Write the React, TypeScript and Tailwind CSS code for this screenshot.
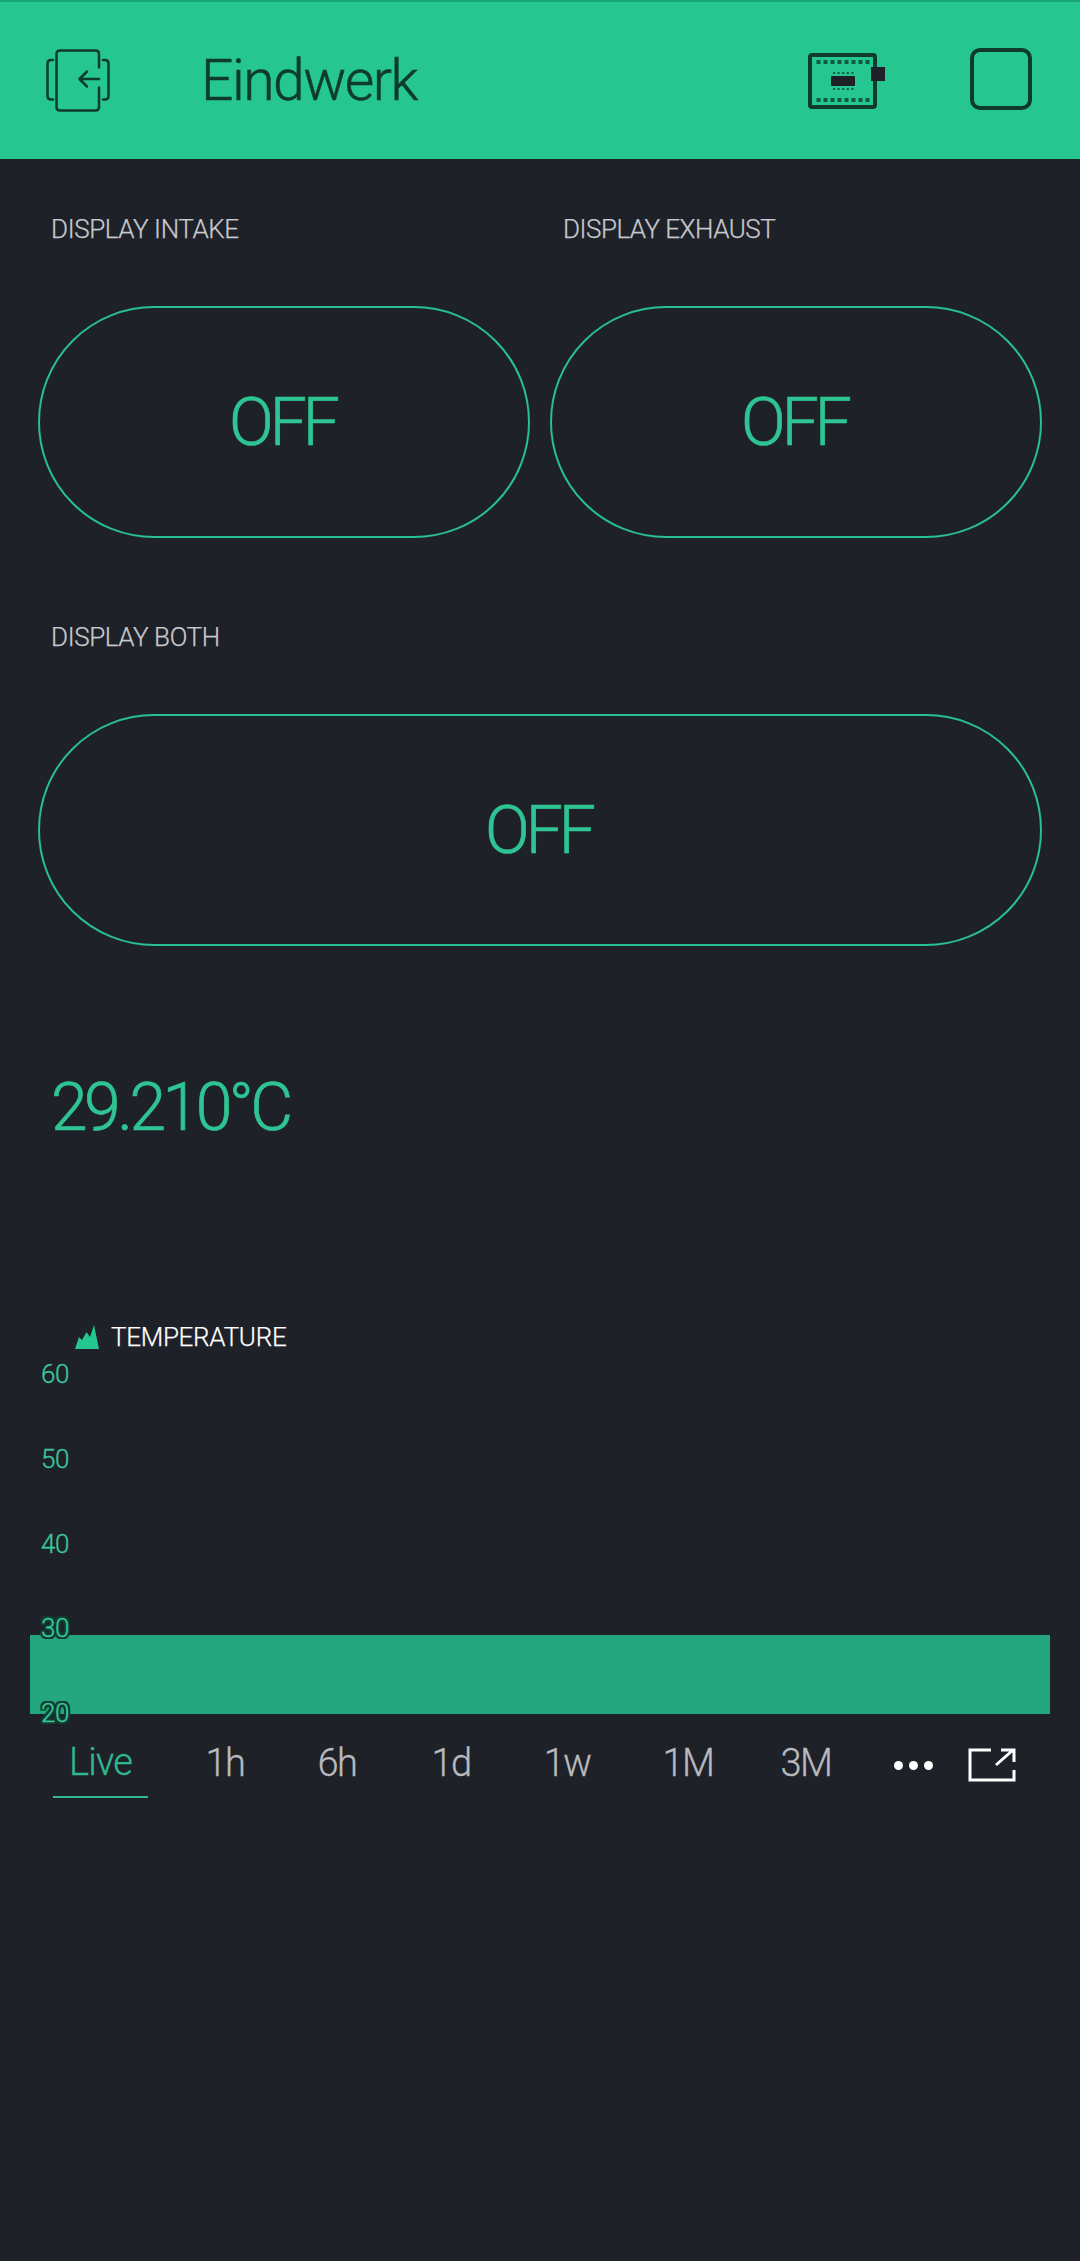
const font = { fontFamily: '"Roboto", "Liberation Sans", sans-serif' };

function DeviceBack() {
  return (
    <svg width="64" height="64" viewBox="0 0 64 64" fill="none" stroke="#0e3b2e" strokeWidth="2.5" strokeLinecap="round" strokeLinejoin="round">
      <path d="M53 18.5V5Q53 1.5 49.5 1.5H14Q10.5 1.5 10.5 5V58Q10.5 61.5 14 61.5H49.5Q53 61.5 53 58V38.5" />
      <path d="M7 11H5Q1.5 11 1.5 14.5V47Q1.5 50.5 5 50.5H7" />
      <path d="M57 11H59Q62.5 11 62.5 14.5V47Q62.5 50.5 59 50.5H57" />
      <path d="M33.5 30H53M41 22.5L33.5 30L41 37.5" />
    </svg>
  );
}

function Chip() {
  const top = [0, 1, 2, 3, 4, 5, 6, 7];
  return (
    <svg width="77" height="56" viewBox="0 0 77 56">
      <rect x="2" y="2" width="65" height="52" rx="2" fill="none" stroke="#0f3a2e" strokeWidth="4" />
      {top.map((i) => (
        <g key={i}>
          <rect x={8.5 + i * 7} y="7" width="4" height="4" fill="#0f5a44" />
          <rect x={8.5 + i * 7} y="45" width="4" height="4" fill="#0f5a44" />
        </g>
      ))}
      {[0, 1, 2, 3, 4].map((i) => (
        <g key={i}>
          <rect x={25 + i * 4.6} y="19" width="2" height="2" fill="#0f5a44" />
          <rect x={25 + i * 4.6} y="35" width="2" height="2" fill="#0f5a44" />
        </g>
      ))}
      <rect x="23" y="23" width="24" height="10" rx="1" fill="#1f1f26" />
      <rect x="63" y="14" width="14" height="14" fill="#1f2028" />
    </svg>
  );
}

function Toggle({ className }: { className: string }) {
  return (
    <div className={`h-[232px] pr-[3px] rounded-full border-2 border-[#27c08e] flex items-center justify-center text-[66px] font-light tracking-[-4px] [-webkit-text-stroke:0.7px] text-[#2fc493] ${className}`}>
      OFF
    </div>
  );
}

function YLabel({ v, halo }: { v: string; halo?: boolean }) {
  return (
    <span className={`h-[26px] leading-[26px] text-[26px] font-light tracking-[-0.5px] [-webkit-text-stroke:0.3px] text-[#3ac99c] ${halo ? "[text-shadow:2px_0_0_#0f3d30,-2px_0_0_#0f3d30,0_2px_0_#0f3d30,0_-2px_0_#0f3d30,2px_2px_0_#0f3d30,-2px_2px_0_#0f3d30,2px_-2px_0_#0f3d30,-2px_-2px_0_#0f3d30]" : ""}`}>
      {v}
    </span>
  );
}

export default function App() {
  return (
    <div style={font} className="w-[1080px] h-[2261px] bg-[#1f2129] flex flex-col overflow-hidden">
      <header className="h-[159px] shrink-0 bg-[#25c690] border-t-[2px] border-[#17a578] flex items-center pl-[46px] pr-[48px]">
        <DeviceBack />
        <h1 className="ml-[91px] text-[57px] font-light text-[#0f3a2e] tracking-[-1.5px] [-webkit-text-stroke:0.5px]">Eindwerk</h1>
        <div className="ml-auto flex items-center gap-[85px]">
          <Chip />
          <div className="mb-[3px] w-[62px] h-[62px] rounded-[10px] border-[4px] border-[#0f3a2e]" />
        </div>
      </header>

      <main className="flex flex-col px-[38px]">
        <div className="grid grid-cols-2 gap-x-[20px] mt-[53px]">
          <p className="pl-[13px] h-[34px] leading-[34px] text-[26px] font-light tracking-[-0.4px] [-webkit-text-stroke:0.25px] text-[#c8c9cd]">DISPLAY INTAKE</p>
          <p className="pl-[13px] h-[34px] leading-[34px] text-[26px] font-light tracking-[-0.5px] [-webkit-text-stroke:0.25px] text-[#c8c9cd]">DISPLAY EXHAUST</p>
          <Toggle className="mt-[60px]" />
          <Toggle className="mt-[60px]" />
        </div>
        <p className="pl-[13px] mt-[82px] h-[34px] leading-[34px] text-[26px] font-light tracking-[-0.4px] [-webkit-text-stroke:0.25px] text-[#c8c9cd]">DISPLAY BOTH</p>
        <Toggle className="mt-[60px]" />
        <p className="pl-[13px] mt-[122px] h-[80px] leading-[80px] text-[66px] font-light tracking-[-3.5px] [-webkit-text-stroke:0.7px] text-[#2fc493]">29.210°C</p>
      </main>

      <section className="mt-[173px] px-[30px]">
        <div className="flex items-center pl-[45px] h-[32px]">
          <svg width="25" height="25" viewBox="0 0 25 25" fill="#25c690">
            <path d="M0 24L4 12L7 15L11.5 7L15 12L19 0L24 24Z" />
          </svg>
          <span className="ml-[11px] text-[26px] font-light tracking-[-0.3px] [-webkit-text-stroke:0.25px] text-white">TEMPERATURE</span>
        </div>
        <div className="relative h-[353px] mt-[8px]">
          <div className="absolute left-0 right-0 bottom-0 h-[79px] bg-[#24a77f]" />
          <div className="absolute left-[11px] top-0 bottom-[-12px] flex flex-col justify-between">
            <YLabel v="60" />
            <YLabel v="50" />
            <YLabel v="40" />
            <YLabel v="30" halo />
            <YLabel v="20" halo />
          </div>
        </div>
      </section>

      <nav className="relative h-[70px] mt-[14px] flex items-center pl-[53px] text-[38px] font-light tracking-[-1.5px] [-webkit-text-stroke:0.3px] text-[#b9babd]">
        <span className="w-[95px] h-[70px] flex items-center justify-center border-b-[2px] border-[#2fb98c] text-[#2fb98c] tracking-[-0.8px]">Live</span>
        <span className="w-[68px] ml-[43px] text-center">1h</span>
        <span className="w-[68px] ml-[44px] text-center">6h</span>
        <span className="w-[68px] ml-[46px] text-center">1d</span>
        <span className="w-[68px] ml-[48px] text-center">1w</span>
        <span className="w-[68px] ml-[53px] text-center">1M</span>
        <span className="w-[68px] ml-[50px] text-center">3M</span>
        <span className="ml-[54px] mt-[5px] flex gap-[6px]">
          <i className="block w-[9px] h-[9px] rounded-full bg-white" />
          <i className="block w-[9px] h-[9px] rounded-full bg-white" />
          <i className="block w-[9px] h-[9px] rounded-full bg-white" />
        </span>
        <svg className="ml-[35px] mt-[3px]" width="48" height="34" viewBox="0 0 48 34" fill="none" stroke="#fff" strokeWidth="3">
          <path d="M23 2H2V32H46V22" />
          <path d="M28 17L45 2M33 2H46V14" />
        </svg>
      </nav>
    </div>
  );
}
